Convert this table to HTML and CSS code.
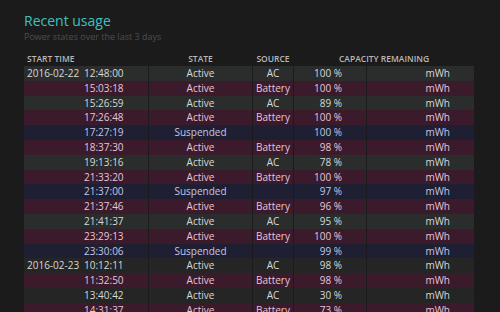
FILE: index.html
```html
<!DOCTYPE html>
<html>
<head>
<meta charset="utf-8">
<link rel="stylesheet" href="styles.css">
</head>
<body>
<div class="page">
  <h1 class="title">Recent usage</h1>
  <p class="subtitle">Power states over the last 3 days</p>
  <div class="table">
    <div class="row head">
      <div class="c c-time">START TIME</div>
      <div class="c c-state">STATE</div>
      <div class="c c-src">SOURCE</div>
      <div class="c c-cap">CAPACITY REMAINING</div>
    </div>
    <div class="row ac"><div class="c c-time"><span class="d">2016-02-22</span><span class="t">12:48:00</span></div><div class="c c-state">Active</div><div class="c c-src">AC</div><div class="c c-pct">100 %</div><div class="c c-mwh">mWh</div></div>
    <div class="row bat"><div class="c c-time"><span class="d"></span><span class="t">15:03:18</span></div><div class="c c-state">Active</div><div class="c c-src">Battery</div><div class="c c-pct">100 %</div><div class="c c-mwh">mWh</div></div>
    <div class="row ac"><div class="c c-time"><span class="d"></span><span class="t">15:26:59</span></div><div class="c c-state">Active</div><div class="c c-src">AC</div><div class="c c-pct">89 %</div><div class="c c-mwh">mWh</div></div>
    <div class="row bat"><div class="c c-time"><span class="d"></span><span class="t">17:26:48</span></div><div class="c c-state">Active</div><div class="c c-src">Battery</div><div class="c c-pct">100 %</div><div class="c c-mwh">mWh</div></div>
    <div class="row sus"><div class="c c-time"><span class="d"></span><span class="t">17:27:19</span></div><div class="c c-state">Suspended</div><div class="c c-src"></div><div class="c c-pct">100 %</div><div class="c c-mwh">mWh</div></div>
    <div class="row bat"><div class="c c-time"><span class="d"></span><span class="t">18:37:30</span></div><div class="c c-state">Active</div><div class="c c-src">Battery</div><div class="c c-pct">98 %</div><div class="c c-mwh">mWh</div></div>
    <div class="row ac"><div class="c c-time"><span class="d"></span><span class="t">19:13:16</span></div><div class="c c-state">Active</div><div class="c c-src">AC</div><div class="c c-pct">78 %</div><div class="c c-mwh">mWh</div></div>
    <div class="row bat"><div class="c c-time"><span class="d"></span><span class="t">21:33:20</span></div><div class="c c-state">Active</div><div class="c c-src">Battery</div><div class="c c-pct">100 %</div><div class="c c-mwh">mWh</div></div>
    <div class="row sus"><div class="c c-time"><span class="d"></span><span class="t">21:37:00</span></div><div class="c c-state">Suspended</div><div class="c c-src"></div><div class="c c-pct">97 %</div><div class="c c-mwh">mWh</div></div>
    <div class="row bat"><div class="c c-time"><span class="d"></span><span class="t">21:37:46</span></div><div class="c c-state">Active</div><div class="c c-src">Battery</div><div class="c c-pct">96 %</div><div class="c c-mwh">mWh</div></div>
    <div class="row ac"><div class="c c-time"><span class="d"></span><span class="t">21:41:37</span></div><div class="c c-state">Active</div><div class="c c-src">AC</div><div class="c c-pct">95 %</div><div class="c c-mwh">mWh</div></div>
    <div class="row bat"><div class="c c-time"><span class="d"></span><span class="t">23:29:13</span></div><div class="c c-state">Active</div><div class="c c-src">Battery</div><div class="c c-pct">100 %</div><div class="c c-mwh">mWh</div></div>
    <div class="row sus"><div class="c c-time"><span class="d"></span><span class="t">23:30:06</span></div><div class="c c-state">Suspended</div><div class="c c-src"></div><div class="c c-pct">99 %</div><div class="c c-mwh">mWh</div></div>
    <div class="row ac dim"><div class="c c-time"><span class="d">2016-02-23</span><span class="t">10:12:11</span></div><div class="c c-state">Active</div><div class="c c-src">AC</div><div class="c c-pct">98 %</div><div class="c c-mwh">mWh</div></div>
    <div class="row bat"><div class="c c-time"><span class="d"></span><span class="t">11:32:50</span></div><div class="c c-state">Active</div><div class="c c-src">Battery</div><div class="c c-pct">98 %</div><div class="c c-mwh">mWh</div></div>
    <div class="row ac dim"><div class="c c-time"><span class="d"></span><span class="t">13:40:42</span></div><div class="c c-state">Active</div><div class="c c-src">AC</div><div class="c c-pct">30 %</div><div class="c c-mwh">mWh</div></div>
    <div class="row bat"><div class="c c-time"><span class="d"></span><span class="t">14:31:37</span></div><div class="c c-state">Active</div><div class="c c-src">Battery</div><div class="c c-pct">73 %</div><div class="c c-mwh">mWh</div></div>
  </div>
</div>
</body>
</html>
```
FILE: styles.css
```css
html, body {
  margin: 0;
  padding: 0;
  background: #1b1b1b;
  overflow: hidden;
}
body {
  width: 500px;
  height: 312px;
  font-family: "Open Sans", "Noto Sans", sans-serif;
}
.page {
  padding: 11px 27px 0 24px;
}
.title {
  margin: 0;
  font-size: 14px;
  font-weight: 400;
  color: #3fc0c0;
  line-height: 20px;
}
.subtitle {
  margin: 0;
  font-size: 9px;
  color: #4e4e4e;
  line-height: 12px;
}
.table {
  margin-top: 9px;
  display: flex;
  flex-direction: column;
}
.row {
  display: grid;
  grid-template-columns: 124px 103px 40px 72px 107px;
  column-gap: 1px;
  height: 14.8px;
  font-size: 10px;
  line-height: 14.8px;
  color: #d8d8d8;
}
.c {
  white-space: nowrap;
  overflow: hidden;
}
.head {
  height: 14px;
  line-height: 14px;
  font-size: 8.5px;
  color: #b8b8b8;
  font-weight: 600;
}
.head .c-cap {
  grid-column: 4 / span 2;
  text-align: center;
}
.c-time {
  padding-left: 3px;
  display: flex;
}
.c-time .d {
  width: 57px;
}
.c-state, .c-src {
  text-align: center;
}
.c-pct {
  text-align: right;
  padding-right: 24px;
}
.c-mwh {
  text-align: right;
  padding-right: 24px;
}
.ac .c { background: #2b2d2c; }
.ac.dim .c { background: #242524; }
.bat .c { background: #3a1a2b; color: #e6c6d8; }
.sus .c { background: #1f1f33; color: #c4c6e4; }
```
